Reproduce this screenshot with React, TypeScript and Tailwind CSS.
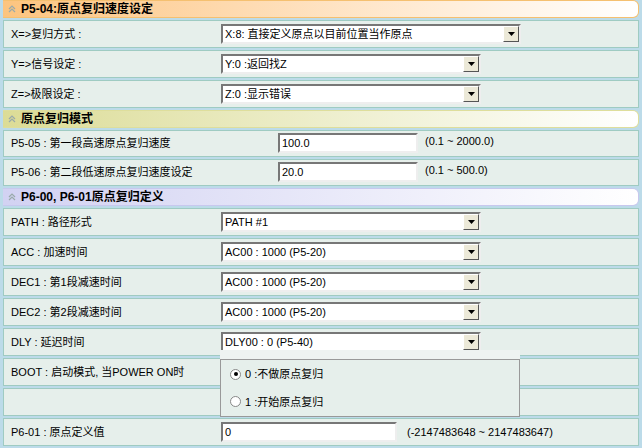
import React from "react";

const font = { fontFamily: "'Liberation Sans', 'Noto Sans CJK SC', sans-serif" };

function Header({ title, from }: { title: string; from: string }) {
  return (
    <div
      className={`h-[18px] flex items-center gap-1 pl-1 rounded-r-md border border-l-0 ${from} text-[12px] font-bold text-black`}
    >
      <svg width="10" height="10" viewBox="0 0 10 10" className="text-[#9aa]">
        <path d="M2 5 L5 2 L8 5 M2 8 L5 5 L8 8" fill="none" stroke="currentColor" strokeWidth="1.2" />
      </svg>
      {title}
    </div>
  );
}

function Select({ value, w }: { value: string; w: string }) {
  return (
    <div className={`${w} h-[20px] flex items-center bg-white border-2 border-t-[#777] border-l-[#777] border-b-[#eee] border-r-[#eee]`}>
      <span className="flex-1 pl-[2px] text-[11px] truncate">{value}</span>
      <div className="w-[16px] h-[16px] bg-[#ece9d8] border border-t-white border-l-white border-b-[#555] border-r-[#555] flex items-center justify-center">
        <svg width="7" height="4" viewBox="0 0 7 4"><path d="M0 0 H7 L3.5 4 Z" fill="#000" /></svg>
      </div>
    </div>
  );
}

function Input({ value, w }: { value: string; w: string }) {
  return (
    <div className={`${w} h-[20px] flex items-center bg-white border-2 border-t-[#777] border-l-[#777] border-b-[#eee] border-r-[#eee] pl-[2px] text-[11px]`}>
      {value}
    </div>
  );
}

function Row({ label, children, h = "h-[28px]" }: { label: string; children?: React.ReactNode; h?: string }) {
  return (
    <div className={`${h} flex items-center bg-[#e6efeb] border border-[#9fcbc2] text-[11px]`}>
      <div className="w-[217px] pl-[7px] shrink-0">{label}</div>
      {children}
    </div>
  );
}

export default function App() {
  const ac = "AC00 : 1000 (P5-20)";
  return (
    <div style={font} className="relative w-[642px] h-[448px] bg-[#bcdbe9] pl-[3px] pr-[3px] flex flex-col gap-[2px] text-black overflow-hidden">
      <Header title="P5-04:原点复归速度设定" from="bg-gradient-to-r from-[#fcc47f] to-white border-[#f5c070]" />
      <Row label="X=>复归方式 :"><Select value="X:8: 直接定义原点以目前位置当作原点" w="w-[300px]" /></Row>
      <Row label="Y=>信号设定 :"><Select value="Y:0 :返回找Z" w="w-[260px]" /></Row>
      <Row label="Z=>极限设定 :"><Select value="Z:0 :显示错误" w="w-[260px]" /></Row>
      <Header title="原点复归模式" from="bg-gradient-to-r from-[#dcdc96] to-white border-[#dede9c]" />
      <Row label="P5-05 : 第一段高速原点复归速度" h="h-[27px]">
        <div className="ml-[57px] flex items-start self-stretch pt-[2px] gap-[7px]">
          <Input value="100.0" w="w-[140px]" /><span>(0.1 ~ 2000.0)</span>
        </div>
      </Row>
      <Row label="P5-06 : 第二段低速原点复归速度设定" h="h-[27px]">
        <div className="ml-[57px] flex items-start self-stretch pt-[2px] gap-[7px]">
          <Input value="20.0" w="w-[140px]" /><span>(0.1 ~ 500.0)</span>
        </div>
      </Row>
      <Header title="P6-00, P6-01原点复归定义" from="bg-gradient-to-r from-[#d2d2f2] to-white border-[#c8c8ee]" />
      <Row label="PATH : 路径形式"><Select value="PATH #1" w="w-[260px]" /></Row>
      <Row label="ACC : 加速时间"><Select value={ac} w="w-[260px]" /></Row>
      <Row label="DEC1 : 第1段减速时间"><Select value={ac} w="w-[260px]" /></Row>
      <Row label="DEC2 : 第2段减速时间"><Select value={ac} w="w-[260px]" /></Row>
      <Row label="DLY : 延迟时间"><Select value="DLY00 : 0 (P5-40)" w="w-[260px]" /></Row>
      <Row label="BOOT : 启动模式, 当POWER ON时" />
      <Row label="" />
      <Row label="P6-01 : 原点定义值">
        <Input value="0" w="w-[176px]" /><span className="ml-[10px]">(-2147483648 ~ 2147483647)</span>
      </Row>
      <div className="absolute left-[220px] top-[350px] w-[300px] h-[10px] bg-[#eef3f1]" />
      <div className="absolute left-[220px] top-[359px] w-[300px] h-[58px] bg-[#e6efeb] border border-[#999] flex flex-col justify-center gap-[11px] pl-[9px] text-[11px]">
        <div className="flex items-center gap-[4px]">
          <span className="w-[11px] h-[11px] rounded-full bg-white border border-[#888] flex items-center justify-center"><span className="w-[4px] h-[4px] rounded-full bg-black" /></span>
          0 :不做原点复归
        </div>
        <div className="flex items-center gap-[4px]">
          <span className="w-[11px] h-[11px] rounded-full bg-white border border-[#888]" />
          1 :开始原点复归
        </div>
      </div>
    </div>
  );
}
